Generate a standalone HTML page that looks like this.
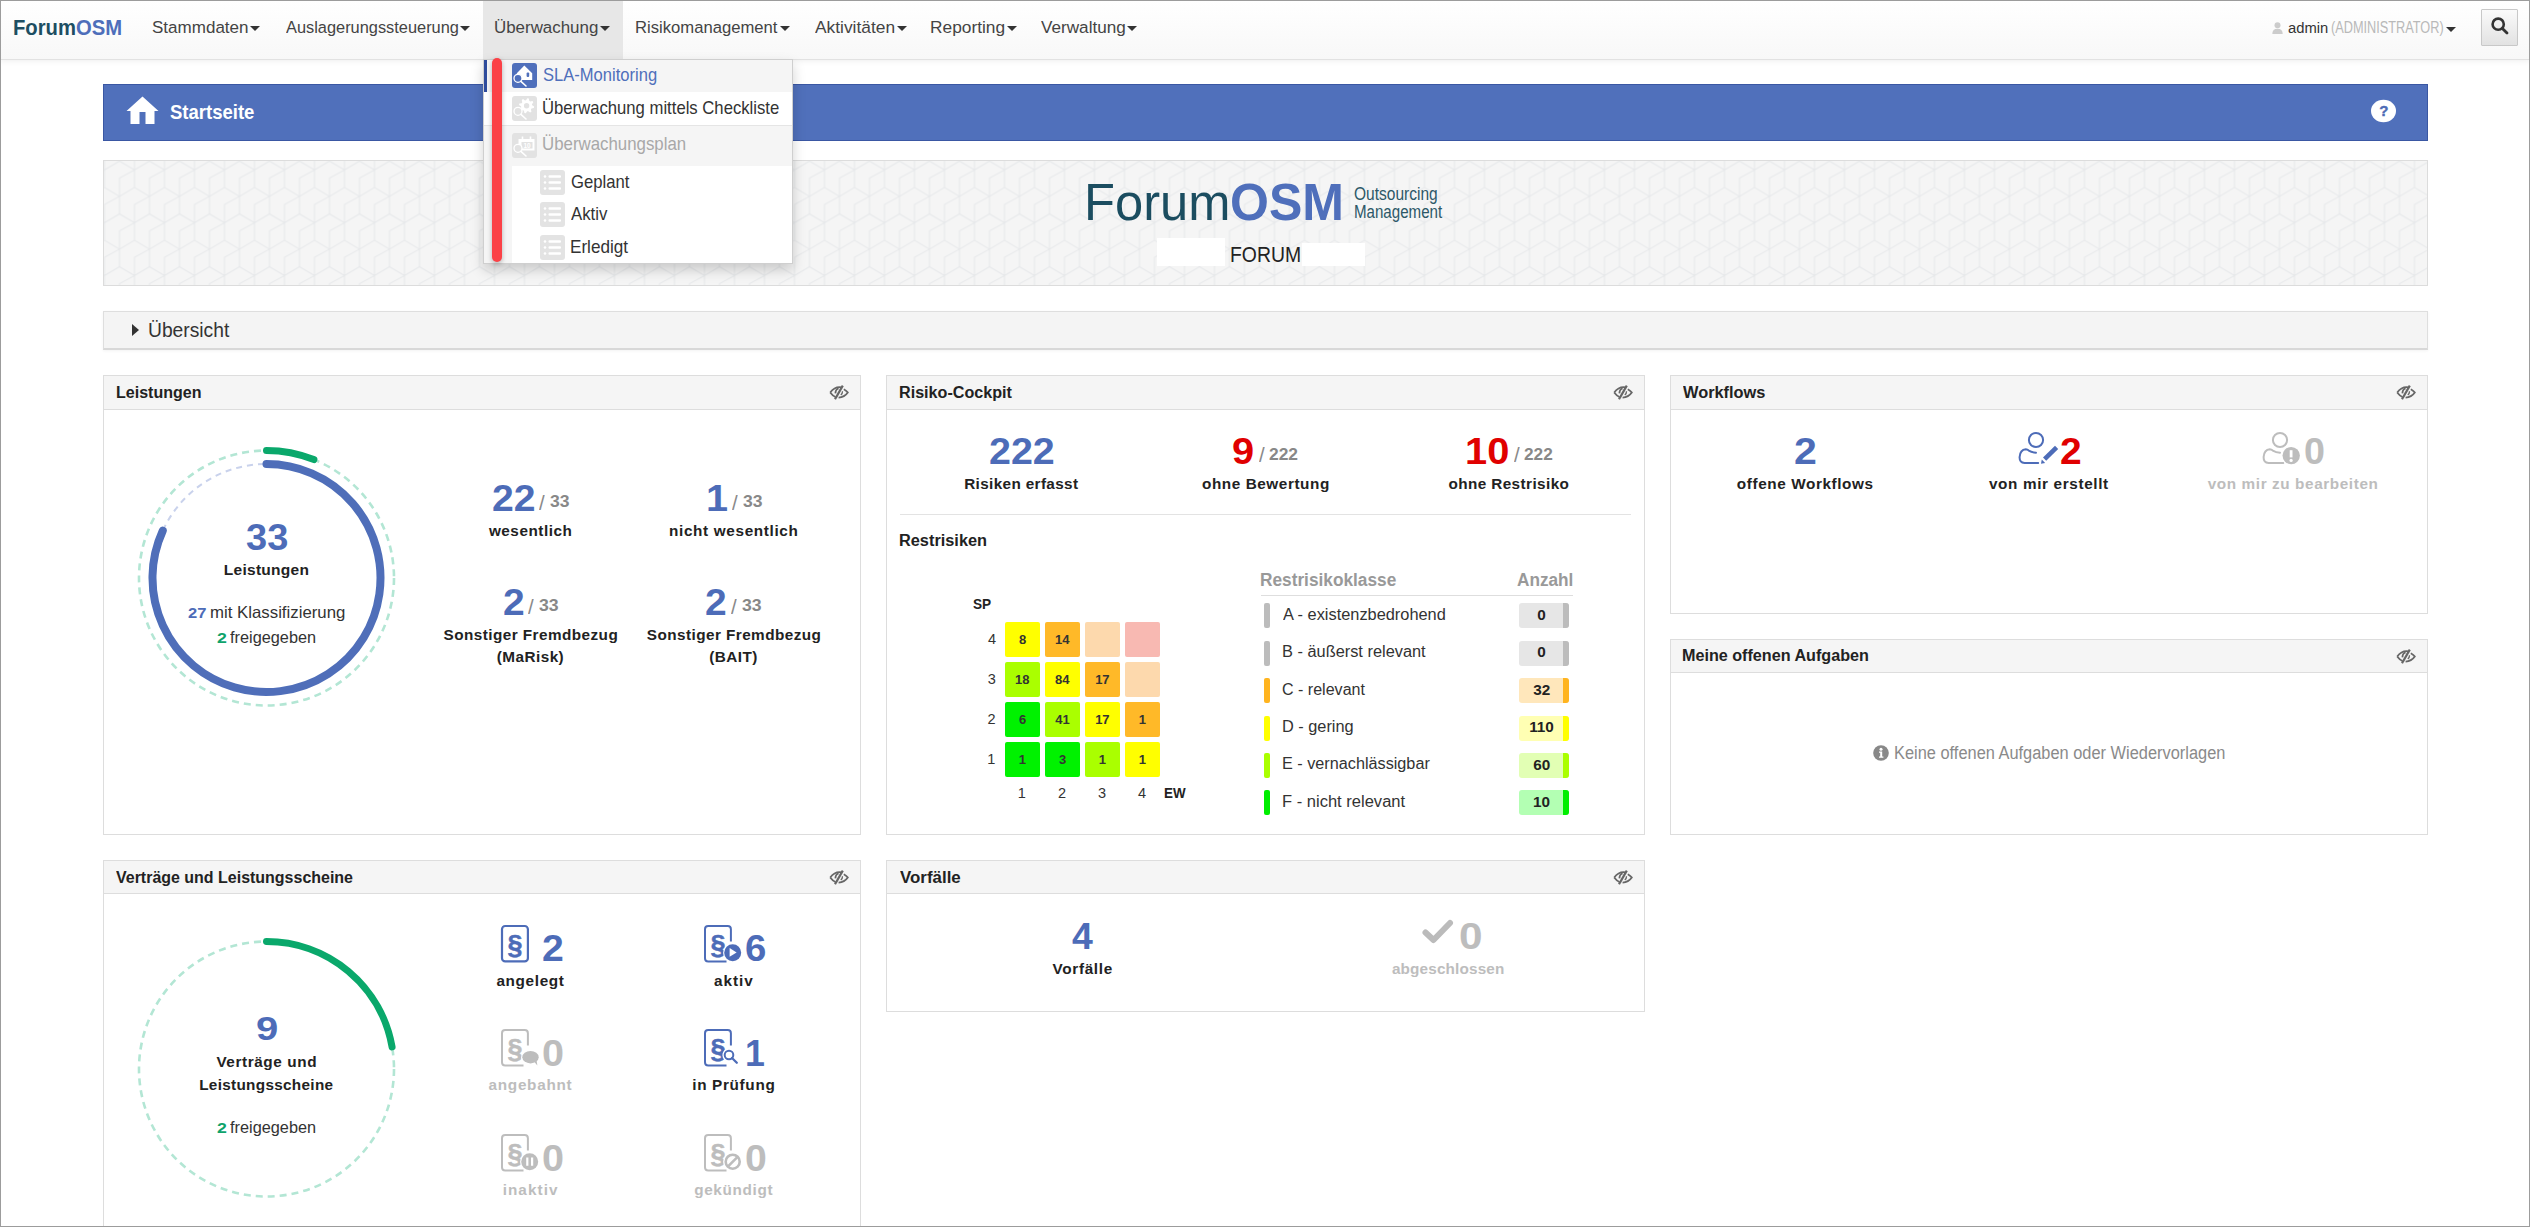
<!DOCTYPE html>
<html><head><meta charset="utf-8"><title>ForumOSM</title>
<style>
html,body{margin:0;padding:0;}
body{width:2530px;height:1227px;position:relative;overflow:hidden;background:#fff;font-family:"Liberation Sans",sans-serif;}
.t{position:absolute;white-space:pre;transform-origin:0 0;}
.r{position:absolute;box-sizing:border-box;}
svg{position:absolute;overflow:visible;}
</style></head><body>
<div class="r" style="left:0px;top:0px;width:2530px;height:60px;background:linear-gradient(#fff,#f8f8f8);border-bottom:1px solid #e2e2e2;box-shadow:0 1px 6px rgba(0,0,0,.07);"></div>
<div class="r" style="left:483px;top:0px;width:140px;height:59px;background:#e7e7e7;"></div>
<div class="t" style="left:12.68px;top:17px;font-size:21.8px;line-height:21.8px;color:#1d4e62;font-weight:bold;transform:scaleX(0.9288);">Forum<span style="color:#4e6eba">OSM</span></div>
<div class="t" style="left:152.23px;top:19px;font-size:17.4px;line-height:17.4px;color:#444;transform:scaleX(0.9790);">Stammdaten</div>
<div class="t" style="left:285.50px;top:19px;font-size:17.4px;line-height:17.4px;color:#444;transform:scaleX(0.9414);">Auslagerungssteuerung</div>
<div class="t" style="left:494.23px;top:19px;font-size:17.4px;line-height:17.4px;color:#444;transform:scaleX(0.9723);">Überwachung</div>
<div class="t" style="left:634.67px;top:19px;font-size:17.4px;line-height:17.4px;color:#444;transform:scaleX(0.9567);">Risikomanagement</div>
<div class="t" style="left:814.80px;top:19px;font-size:17.4px;line-height:17.4px;color:#444;transform:scaleX(0.9979);">Aktivitäten</div>
<div class="t" style="left:930.41px;top:19px;font-size:17.4px;line-height:17.4px;color:#444;transform:scaleX(0.9960);">Reporting</div>
<div class="t" style="left:1040.91px;top:19px;font-size:17.4px;line-height:17.4px;color:#444;transform:scaleX(0.9857);">Verwaltung</div>
<div class="r" style="left:249.5px;top:26px;width:0;height:0;border-left:5px solid transparent;border-right:5px solid transparent;border-top:5.5px solid #333;"></div>
<div class="r" style="left:460.3px;top:26px;width:0;height:0;border-left:5px solid transparent;border-right:5px solid transparent;border-top:5.5px solid #333;"></div>
<div class="r" style="left:599.8px;top:26px;width:0;height:0;border-left:5px solid transparent;border-right:5px solid transparent;border-top:5.5px solid #333;"></div>
<div class="r" style="left:779.5px;top:26px;width:0;height:0;border-left:5px solid transparent;border-right:5px solid transparent;border-top:5.5px solid #333;"></div>
<div class="r" style="left:897px;top:26px;width:0;height:0;border-left:5px solid transparent;border-right:5px solid transparent;border-top:5.5px solid #333;"></div>
<div class="r" style="left:1006.8px;top:26px;width:0;height:0;border-left:5px solid transparent;border-right:5px solid transparent;border-top:5.5px solid #333;"></div>
<div class="r" style="left:1126.9px;top:26px;width:0;height:0;border-left:5px solid transparent;border-right:5px solid transparent;border-top:5.5px solid #333;"></div>
<svg style="left:2272px;top:22px" width="11" height="12" viewBox="0 0 11 12"><circle cx="5.5" cy="3.2" r="3" fill="#ccc"/><path d="M0.3 12 Q0.3 6.8 5.5 6.8 Q10.7 6.8 10.7 12 Z" fill="#ccc"/></svg>
<div class="t" style="left:2288.01px;top:20px;font-size:15.2px;line-height:15.2px;color:#333;transform:scaleX(0.9724);">admin</div>
<div class="t" style="left:2330.74px;top:20px;font-size:15.6px;line-height:15.6px;color:#b9b9b9;transform:scaleX(0.8165);">(ADMINISTRATOR)</div>
<div class="r" style="left:2446px;top:27px;width:0;height:0;border-left:5px solid transparent;border-right:5px solid transparent;border-top:5px solid #333;"></div>
<div class="r" style="left:2481px;top:9px;width:37px;height:37px;border:1px solid #c8c8c8;background:linear-gradient(#fafafa,#e2e2e2);border-radius:1px;"></div>
<svg style="left:2491px;top:17px" width="18" height="18" viewBox="0 0 18 18"><circle cx="7.2" cy="7.2" r="5.6" fill="none" stroke="#333" stroke-width="2.6"/><line x1="11.4" y1="11.4" x2="16" y2="16" stroke="#333" stroke-width="2.8" stroke-linecap="round"/></svg>
<div class="r" style="left:103px;top:84px;width:2325px;height:57px;background:#5070bb;border:1px solid #3a57a3;"></div>
<svg style="left:126px;top:96px" width="33" height="29" viewBox="0 0 33 29"><path d="M16.5 0.5 L32.5 15 L28.5 15 L28.5 28 L19.5 28 L19.5 16 L13.5 16 L13.5 28 L4.5 28 L4.5 15 L0.5 15 Z" fill="#fff"/></svg>
<div class="t" style="left:170.14px;top:103px;font-size:19.3px;line-height:19.3px;color:#fff;font-weight:bold;transform:scaleX(0.9602);">Startseite</div>
<svg style="left:2371px;top:99px" width="25" height="25" viewBox="0 0 25 25"><ellipse cx="12.5" cy="12" rx="12.5" ry="11.2" fill="#fff"/><text x="12.8" y="16.9" text-anchor="middle" font-family="Liberation Sans" font-weight="bold" font-size="15" fill="#4e6cb6" stroke="#4e6cb6" stroke-width="0.4">?</text></svg>
<svg style="left:103px;top:160px" width="2325" height="126"><defs><pattern id="hx" patternUnits="userSpaceOnUse" x="1.5" y="27.5" width="30" height="52.8"><path d="M-30.00 -52.80 L-15.00 -44.00 L0.00 -52.80 M-15.00 -44.00 L-30.00 -35.70 L-30.00 0.00 M-15.00 -26.40 L0.00 -17.60 L15.00 -26.40 M0.00 -17.60 L-15.00 -9.30 L-15.00 26.40 M-30.00 0.00 L-15.00 8.80 L0.00 0.00 M-15.00 8.80 L-30.00 17.10 L-30.00 52.80 M-15.00 26.40 L0.00 35.20 L15.00 26.40 M0.00 35.20 L-15.00 43.50 L-15.00 79.20 M-30.00 52.80 L-15.00 61.60 L0.00 52.80 M-15.00 61.60 L-30.00 69.90 L-30.00 105.60 M-15.00 79.20 L0.00 88.00 L15.00 79.20 M0.00 88.00 L-15.00 96.30 L-15.00 132.00 M0.00 -52.80 L15.00 -44.00 L30.00 -52.80 M15.00 -44.00 L0.00 -35.70 L0.00 0.00 M15.00 -26.40 L30.00 -17.60 L45.00 -26.40 M30.00 -17.60 L15.00 -9.30 L15.00 26.40 M0.00 0.00 L15.00 8.80 L30.00 0.00 M15.00 8.80 L0.00 17.10 L0.00 52.80 M15.00 26.40 L30.00 35.20 L45.00 26.40 M30.00 35.20 L15.00 43.50 L15.00 79.20 M0.00 52.80 L15.00 61.60 L30.00 52.80 M15.00 61.60 L0.00 69.90 L0.00 105.60 M15.00 79.20 L30.00 88.00 L45.00 79.20 M30.00 88.00 L15.00 96.30 L15.00 132.00 M30.00 -52.80 L45.00 -44.00 L60.00 -52.80 M45.00 -44.00 L30.00 -35.70 L30.00 0.00 M45.00 -26.40 L60.00 -17.60 L75.00 -26.40 M60.00 -17.60 L45.00 -9.30 L45.00 26.40 M30.00 0.00 L45.00 8.80 L60.00 0.00 M45.00 8.80 L30.00 17.10 L30.00 52.80 M45.00 26.40 L60.00 35.20 L75.00 26.40 M60.00 35.20 L45.00 43.50 L45.00 79.20 M30.00 52.80 L45.00 61.60 L60.00 52.80 M45.00 61.60 L30.00 69.90 L30.00 105.60 M45.00 79.20 L60.00 88.00 L75.00 79.20 M60.00 88.00 L45.00 96.30 L45.00 132.00" fill="none" stroke="#e6e8ea" stroke-width="1"/></pattern></defs>
<rect x="0.5" y="0.5" width="2324" height="125" fill="#f5f5f5" stroke="#dcdcdc"/><rect x="1" y="1" width="2323" height="124" fill="url(#hx)"/></svg>
<div class="t" style="left:1083.65px;top:176px;font-size:52px;line-height:52px;color:#1b4d60;transform:scaleX(0.9745);">Forum</div>
<div class="t" style="left:1230.00px;top:176px;font-size:52px;line-height:52px;color:#4f6fbb;font-weight:bold;transform:scaleX(0.9624);">OSM</div>
<div class="t" style="left:1354.30px;top:186px;font-size:17.5px;line-height:17.5px;color:#2c5868;transform:scaleX(0.8866);">Outsourcing</div>
<div class="t" style="left:1353.79px;top:204px;font-size:17.5px;line-height:17.5px;color:#2c5868;transform:scaleX(0.8626);">Management</div>
<div class="r" style="left:1157px;top:238px;width:68px;height:28px;background:#fff;"></div>
<div class="r" style="left:1302px;top:243px;width:63px;height:23px;background:#fff;"></div>
<div class="t" style="left:1229.95px;top:245px;font-size:21.4px;line-height:21.4px;color:#222;transform:scaleX(0.9066);">FORUM</div>
<div class="r" style="left:103px;top:311px;width:2325px;height:39px;background:#f4f4f4;border:1px solid #dedede;border-bottom:2px solid #d8d8d8;box-shadow:0 1px 3px rgba(0,0,0,.05);"></div>
<div class="r" style="left:132px;top:324px;width:0;height:0;border-top:6px solid transparent;border-bottom:6px solid transparent;border-left:7px solid #333;"></div>
<div class="t" style="left:147.86px;top:321px;font-size:19.6px;line-height:19.6px;color:#333;transform:scaleX(0.9822);">Übersicht</div>
<div class="r" style="left:103px;top:375px;width:758px;height:460px;border:1px solid #dddddd;background:#fff;"></div>
<div class="r" style="left:103px;top:375px;width:758px;height:35px;border:1px solid #dddddd;background:#f5f5f5;"></div>
<div class="t" style="left:116.46px;top:384px;font-size:17.4px;line-height:17.4px;color:#222;font-weight:bold;transform:scaleX(0.9211);">Leistungen</div>
<svg style="left:828.8px;top:384.5px" width="20" height="15" viewBox="0 0 20 15"><path d="M1.2 7.5 Q6 1.2 12.6 2.4" fill="none" stroke="#666" stroke-width="1.8"/><path d="M1.2 7.5 Q3.5 10.6 6.5 12" fill="none" stroke="#666" stroke-width="1.8"/><path d="M14.8 4.2 Q17.5 5.6 18.8 7.5 Q15.5 12.2 9.6 12.6" fill="none" stroke="#666" stroke-width="1.8"/><path d="M13.8 0.6 L6 14.2" stroke="#666" stroke-width="2.2"/><path d="M9.6 3.4 Q6.6 4.2 6.4 8.4" fill="none" stroke="#666" stroke-width="1.8"/><path d="M13.5 6.2 Q13.6 8.6 11.8 10" fill="none" stroke="#666" stroke-width="1.3"/></svg>
<div class="r" style="left:886px;top:375px;width:759px;height:460px;border:1px solid #dddddd;background:#fff;"></div>
<div class="r" style="left:886px;top:375px;width:759px;height:35px;border:1px solid #dddddd;background:#f5f5f5;"></div>
<div class="t" style="left:898.95px;top:384px;font-size:17.4px;line-height:17.4px;color:#222;font-weight:bold;transform:scaleX(0.9278);">Risiko-Cockpit</div>
<svg style="left:1612.8px;top:384.5px" width="20" height="15" viewBox="0 0 20 15"><path d="M1.2 7.5 Q6 1.2 12.6 2.4" fill="none" stroke="#666" stroke-width="1.8"/><path d="M1.2 7.5 Q3.5 10.6 6.5 12" fill="none" stroke="#666" stroke-width="1.8"/><path d="M14.8 4.2 Q17.5 5.6 18.8 7.5 Q15.5 12.2 9.6 12.6" fill="none" stroke="#666" stroke-width="1.8"/><path d="M13.8 0.6 L6 14.2" stroke="#666" stroke-width="2.2"/><path d="M9.6 3.4 Q6.6 4.2 6.4 8.4" fill="none" stroke="#666" stroke-width="1.8"/><path d="M13.5 6.2 Q13.6 8.6 11.8 10" fill="none" stroke="#666" stroke-width="1.3"/></svg>
<div class="r" style="left:1670px;top:375px;width:758px;height:239px;border:1px solid #dddddd;background:#fff;"></div>
<div class="r" style="left:1670px;top:375px;width:758px;height:35px;border:1px solid #dddddd;background:#f5f5f5;"></div>
<div class="t" style="left:1683.40px;top:384px;font-size:17.4px;line-height:17.4px;color:#222;font-weight:bold;transform:scaleX(0.9412);">Workflows</div>
<svg style="left:2395.8px;top:384.5px" width="20" height="15" viewBox="0 0 20 15"><path d="M1.2 7.5 Q6 1.2 12.6 2.4" fill="none" stroke="#666" stroke-width="1.8"/><path d="M1.2 7.5 Q3.5 10.6 6.5 12" fill="none" stroke="#666" stroke-width="1.8"/><path d="M14.8 4.2 Q17.5 5.6 18.8 7.5 Q15.5 12.2 9.6 12.6" fill="none" stroke="#666" stroke-width="1.8"/><path d="M13.8 0.6 L6 14.2" stroke="#666" stroke-width="2.2"/><path d="M9.6 3.4 Q6.6 4.2 6.4 8.4" fill="none" stroke="#666" stroke-width="1.8"/><path d="M13.5 6.2 Q13.6 8.6 11.8 10" fill="none" stroke="#666" stroke-width="1.3"/></svg>
<div class="r" style="left:1670px;top:639px;width:758px;height:196px;border:1px solid #dddddd;background:#fff;"></div>
<div class="r" style="left:1670px;top:639px;width:758px;height:34px;border:1px solid #dddddd;background:#f5f5f5;"></div>
<div class="t" style="left:1682.35px;top:647px;font-size:17.4px;line-height:17.4px;color:#222;font-weight:bold;transform:scaleX(0.9286);">Meine offenen Aufgaben</div>
<svg style="left:2395.8px;top:648.5px" width="20" height="15" viewBox="0 0 20 15"><path d="M1.2 7.5 Q6 1.2 12.6 2.4" fill="none" stroke="#666" stroke-width="1.8"/><path d="M1.2 7.5 Q3.5 10.6 6.5 12" fill="none" stroke="#666" stroke-width="1.8"/><path d="M14.8 4.2 Q17.5 5.6 18.8 7.5 Q15.5 12.2 9.6 12.6" fill="none" stroke="#666" stroke-width="1.8"/><path d="M13.8 0.6 L6 14.2" stroke="#666" stroke-width="2.2"/><path d="M9.6 3.4 Q6.6 4.2 6.4 8.4" fill="none" stroke="#666" stroke-width="1.8"/><path d="M13.5 6.2 Q13.6 8.6 11.8 10" fill="none" stroke="#666" stroke-width="1.3"/></svg>
<div class="r" style="left:103px;top:860px;width:758px;height:400px;border:1px solid #dddddd;background:#fff;"></div>
<div class="r" style="left:103px;top:860px;width:758px;height:34px;border:1px solid #dddddd;background:#f5f5f5;"></div>
<div class="t" style="left:116.42px;top:869px;font-size:17.4px;line-height:17.4px;color:#222;font-weight:bold;transform:scaleX(0.9184);">Verträge und Leistungsscheine</div>
<svg style="left:828.8px;top:869.5px" width="20" height="15" viewBox="0 0 20 15"><path d="M1.2 7.5 Q6 1.2 12.6 2.4" fill="none" stroke="#666" stroke-width="1.8"/><path d="M1.2 7.5 Q3.5 10.6 6.5 12" fill="none" stroke="#666" stroke-width="1.8"/><path d="M14.8 4.2 Q17.5 5.6 18.8 7.5 Q15.5 12.2 9.6 12.6" fill="none" stroke="#666" stroke-width="1.8"/><path d="M13.8 0.6 L6 14.2" stroke="#666" stroke-width="2.2"/><path d="M9.6 3.4 Q6.6 4.2 6.4 8.4" fill="none" stroke="#666" stroke-width="1.8"/><path d="M13.5 6.2 Q13.6 8.6 11.8 10" fill="none" stroke="#666" stroke-width="1.3"/></svg>
<div class="r" style="left:886px;top:860px;width:759px;height:152px;border:1px solid #dddddd;background:#fff;"></div>
<div class="r" style="left:886px;top:860px;width:759px;height:34px;border:1px solid #dddddd;background:#f5f5f5;"></div>
<div class="t" style="left:899.92px;top:869px;font-size:17.4px;line-height:17.4px;color:#222;font-weight:bold;transform:scaleX(0.9718);">Vorfälle</div>
<svg style="left:1612.8px;top:869.5px" width="20" height="15" viewBox="0 0 20 15"><path d="M1.2 7.5 Q6 1.2 12.6 2.4" fill="none" stroke="#666" stroke-width="1.8"/><path d="M1.2 7.5 Q3.5 10.6 6.5 12" fill="none" stroke="#666" stroke-width="1.8"/><path d="M14.8 4.2 Q17.5 5.6 18.8 7.5 Q15.5 12.2 9.6 12.6" fill="none" stroke="#666" stroke-width="1.8"/><path d="M13.8 0.6 L6 14.2" stroke="#666" stroke-width="2.2"/><path d="M9.6 3.4 Q6.6 4.2 6.4 8.4" fill="none" stroke="#666" stroke-width="1.8"/><path d="M13.5 6.2 Q13.6 8.6 11.8 10" fill="none" stroke="#666" stroke-width="1.3"/></svg>
<svg style="left:0;top:0" width="900" height="1227">
<circle cx="266.5" cy="578" r="127.5" fill="none" stroke="#b3e6d4" stroke-width="2.6" stroke-dasharray="7 5"/>
<circle cx="266.5" cy="578" r="114" fill="none" stroke="#c9d2ec" stroke-width="2" stroke-dasharray="6 5"/>
<path d="M266.50 464.00 A114 114 0 1 1 162.76 530.72" fill="none" stroke="#4f6eb9" stroke-width="8" stroke-linecap="round"/>
<path d="M266.50 450.50 A127.5 127.5 0 0 1 313.85 459.62" fill="none" stroke="#0aa86b" stroke-width="7" stroke-linecap="round"/>
</svg>
<div class="t" style="left:245.64px;top:520px;font-size:36.4px;line-height:36.4px;color:#4d6cb8;font-weight:bold;transform:scaleX(1.0442);">33</div>
<div class="t" style="left:223.79px;top:562px;font-size:15.5px;line-height:15.5px;color:#222;font-weight:bold;letter-spacing:0.272px;">Leistungen</div>
<div class="t" style="left:188.42px;top:605px;font-size:15.2px;line-height:15.2px;color:#4d6cb8;font-weight:bold;transform:scaleX(1.0870);">27</div>
<div class="t" style="left:210.31px;top:604px;font-size:16.5px;line-height:16.5px;color:#333;transform:scaleX(1.0180);">mit Klassifizierung</div>
<div class="t" style="left:216.88px;top:630px;font-size:15.2px;line-height:15.2px;color:#0ea36b;font-weight:bold;transform:scaleX(1.1650);">2</div>
<div class="t" style="left:230.26px;top:629px;font-size:16.5px;line-height:16.5px;color:#333;transform:scaleX(0.9874);">freigegeben</div>
<div class="t" style="left:491.73px;top:480px;font-size:37px;line-height:37px;color:#4d6cb8;font-weight:bold;transform:scaleX(1.0576);">22</div>
<div class="t" style="left:539.00px;top:493px;font-size:20.5px;line-height:20.5px;color:#8a8a8a;transform:scaleX(0.9930);">/</div>
<div class="t" style="left:549.55px;top:493px;font-size:17.2px;line-height:17.2px;color:#888;font-weight:bold;transform:scaleX(1.0195);">33</div>
<div class="t" style="left:488.88px;top:523px;font-size:15.3px;line-height:15.3px;color:#222;font-weight:bold;letter-spacing:0.540px;">wesentlich</div>
<div class="t" style="left:705.63px;top:480px;font-size:37px;line-height:37px;color:#4d6cb8;font-weight:bold;transform:scaleX(1.0696);">1</div>
<div class="t" style="left:732.00px;top:493px;font-size:20.5px;line-height:20.5px;color:#8a8a8a;transform:scaleX(0.9930);">/</div>
<div class="t" style="left:742.55px;top:493px;font-size:17.2px;line-height:17.2px;color:#888;font-weight:bold;transform:scaleX(1.0195);">33</div>
<div class="t" style="left:669.01px;top:523px;font-size:15.3px;line-height:15.3px;color:#222;font-weight:bold;letter-spacing:0.659px;">nicht wesentlich</div>
<div class="t" style="left:502.64px;top:584px;font-size:37px;line-height:37px;color:#4d6cb8;font-weight:bold;transform:scaleX(1.0529);">2</div>
<div class="t" style="left:528.00px;top:597px;font-size:20.5px;line-height:20.5px;color:#8a8a8a;transform:scaleX(0.9930);">/</div>
<div class="t" style="left:538.55px;top:597px;font-size:17.2px;line-height:17.2px;color:#888;font-weight:bold;transform:scaleX(1.0250);">33</div>
<div class="t" style="left:443.54px;top:627px;font-size:15.3px;line-height:15.3px;color:#222;font-weight:bold;letter-spacing:0.446px;">Sonstiger Fremdbezug</div>
<div class="t" style="left:496.84px;top:649px;font-size:15.3px;line-height:15.3px;color:#222;font-weight:bold;letter-spacing:0.447px;">(MaRisk)</div>
<div class="t" style="left:705.24px;top:584px;font-size:37px;line-height:37px;color:#4d6cb8;font-weight:bold;transform:scaleX(1.0529);">2</div>
<div class="t" style="left:731.00px;top:597px;font-size:20.5px;line-height:20.5px;color:#8a8a8a;transform:scaleX(0.9930);">/</div>
<div class="t" style="left:741.55px;top:597px;font-size:17.2px;line-height:17.2px;color:#888;font-weight:bold;transform:scaleX(1.0250);">33</div>
<div class="t" style="left:646.84px;top:627px;font-size:15.3px;line-height:15.3px;color:#222;font-weight:bold;letter-spacing:0.436px;">Sonstiger Fremdbezug</div>
<div class="t" style="left:709.24px;top:649px;font-size:15.3px;line-height:15.3px;color:#222;font-weight:bold;letter-spacing:0.446px;">(BAIT)</div>
<div class="t" style="left:988.82px;top:433px;font-size:37px;line-height:37px;color:#4d6cb8;font-weight:bold;transform:scaleX(1.0658);">222</div>
<div class="t" style="left:964.21px;top:476px;font-size:15.3px;line-height:15.3px;color:#222;font-weight:bold;letter-spacing:0.355px;">Risiken erfasst</div>
<div class="t" style="left:1232.31px;top:433px;font-size:37px;line-height:37px;color:#e00000;font-weight:bold;transform:scaleX(1.0755);">9</div>
<div class="t" style="left:1259.00px;top:445px;font-size:20.5px;line-height:20.5px;color:#8a8a8a;transform:scaleX(0.9930);">/</div>
<div class="t" style="left:1269.29px;top:446px;font-size:17.2px;line-height:17.2px;color:#888;font-weight:bold;transform:scaleX(1.0129);">222</div>
<div class="t" style="left:1201.99px;top:476px;font-size:15.3px;line-height:15.3px;color:#222;font-weight:bold;letter-spacing:0.572px;">ohne Bewertung</div>
<div class="t" style="left:1465.01px;top:433px;font-size:37px;line-height:37px;color:#e00000;font-weight:bold;transform:scaleX(1.0757);">10</div>
<div class="t" style="left:1513.70px;top:445px;font-size:20.5px;line-height:20.5px;color:#8a8a8a;transform:scaleX(0.9930);">/</div>
<div class="t" style="left:1524.00px;top:446px;font-size:17.2px;line-height:17.2px;color:#888;font-weight:bold;transform:scaleX(1.0019);">222</div>
<div class="t" style="left:1448.39px;top:476px;font-size:15.3px;line-height:15.3px;color:#222;font-weight:bold;letter-spacing:0.414px;">ohne Restrisiko</div>
<div class="r" style="left:900px;top:514px;width:731px;height:1px;background:#e3e3e3;"></div>
<div class="t" style="left:898.94px;top:532px;font-size:17.4px;line-height:17.4px;color:#222;font-weight:bold;transform:scaleX(0.9388);">Restrisiken</div>
<div class="t" style="left:973.09px;top:597px;font-size:14.5px;line-height:14.5px;color:#222;font-weight:bold;transform:scaleX(0.9395);">SP</div>
<div class="t" style="left:988.01px;top:632px;font-size:14.5px;line-height:14.5px;color:#333;">4</div>
<div class="r" style="left:1005px;top:622px;width:35px;height:35px;background:#ffff00;border-radius:2px;"></div>
<div class="t" style="left:1018.89px;top:633px;font-size:13px;line-height:13px;color:#333;font-weight:bold;">8</div>
<div class="r" style="left:1045px;top:622px;width:35px;height:35px;background:#ffb928;border-radius:2px;"></div>
<div class="t" style="left:1054.93px;top:633px;font-size:13px;line-height:13px;color:#333;font-weight:bold;">14</div>
<div class="r" style="left:1085px;top:622px;width:35px;height:35px;background:#fdd9ad;border-radius:2px;"></div>
<div class="r" style="left:1125px;top:622px;width:35px;height:35px;background:#f8b9b2;border-radius:2px;"></div>
<div class="t" style="left:987.79px;top:672px;font-size:14.5px;line-height:14.5px;color:#333;">3</div>
<div class="r" style="left:1005px;top:662px;width:35px;height:35px;background:#aaff00;border-radius:2px;"></div>
<div class="t" style="left:1015.09px;top:673px;font-size:13px;line-height:13px;color:#333;font-weight:bold;">18</div>
<div class="r" style="left:1045px;top:662px;width:35px;height:35px;background:#ffff00;border-radius:2px;"></div>
<div class="t" style="left:1055.12px;top:673px;font-size:13px;line-height:13px;color:#333;font-weight:bold;">84</div>
<div class="r" style="left:1085px;top:662px;width:35px;height:35px;background:#ffb928;border-radius:2px;"></div>
<div class="t" style="left:1095.15px;top:673px;font-size:13px;line-height:13px;color:#333;font-weight:bold;">17</div>
<div class="r" style="left:1125px;top:662px;width:35px;height:35px;background:#fdd9ad;border-radius:2px;"></div>
<div class="t" style="left:987.57px;top:712px;font-size:14.5px;line-height:14.5px;color:#333;">2</div>
<div class="r" style="left:1005px;top:702px;width:35px;height:35px;background:#00f200;border-radius:2px;"></div>
<div class="t" style="left:1018.89px;top:713px;font-size:13px;line-height:13px;color:#333;font-weight:bold;">6</div>
<div class="r" style="left:1045px;top:702px;width:35px;height:35px;background:#aaff00;border-radius:2px;"></div>
<div class="t" style="left:1055.35px;top:713px;font-size:13px;line-height:13px;color:#333;font-weight:bold;">41</div>
<div class="r" style="left:1085px;top:702px;width:35px;height:35px;background:#ffff00;border-radius:2px;"></div>
<div class="t" style="left:1095.15px;top:713px;font-size:13px;line-height:13px;color:#333;font-weight:bold;">17</div>
<div class="r" style="left:1125px;top:702px;width:35px;height:35px;background:#ffb928;border-radius:2px;"></div>
<div class="t" style="left:1138.66px;top:713px;font-size:13px;line-height:13px;color:#333;font-weight:bold;">1</div>
<div class="t" style="left:987.21px;top:752px;font-size:14.5px;line-height:14.5px;color:#333;">1</div>
<div class="r" style="left:1005px;top:742px;width:35px;height:35px;background:#00f200;border-radius:2px;"></div>
<div class="t" style="left:1018.67px;top:753px;font-size:13px;line-height:13px;color:#333;font-weight:bold;">1</div>
<div class="r" style="left:1045px;top:742px;width:35px;height:35px;background:#00f200;border-radius:2px;"></div>
<div class="t" style="left:1058.99px;top:753px;font-size:13px;line-height:13px;color:#333;font-weight:bold;">3</div>
<div class="r" style="left:1085px;top:742px;width:35px;height:35px;background:#aaff00;border-radius:2px;"></div>
<div class="t" style="left:1098.66px;top:753px;font-size:13px;line-height:13px;color:#333;font-weight:bold;">1</div>
<div class="r" style="left:1125px;top:742px;width:35px;height:35px;background:#ffff00;border-radius:2px;"></div>
<div class="t" style="left:1138.66px;top:753px;font-size:13px;line-height:13px;color:#333;font-weight:bold;">1</div>
<div class="t" style="left:1017.76px;top:786px;font-size:14.5px;line-height:14.5px;color:#333;">1</div>
<div class="t" style="left:1057.98px;top:786px;font-size:14.5px;line-height:14.5px;color:#333;">2</div>
<div class="t" style="left:1098.01px;top:786px;font-size:14.5px;line-height:14.5px;color:#333;">3</div>
<div class="t" style="left:1138.01px;top:786px;font-size:14.5px;line-height:14.5px;color:#333;">4</div>
<div class="t" style="left:1164.13px;top:786px;font-size:14.5px;line-height:14.5px;color:#222;font-weight:bold;transform:scaleX(0.9240);">EW</div>
<div class="t" style="left:1260.18px;top:572px;font-size:17.5px;line-height:17.5px;color:#999;font-weight:bold;transform:scaleX(0.9861);">Restrisikoklasse</div>
<div class="t" style="left:1517.17px;top:572px;font-size:17.5px;line-height:17.5px;color:#999;font-weight:bold;transform:scaleX(0.9832);">Anzahl</div>
<div class="r" style="left:1261px;top:595px;width:312px;height:1px;background:#dedede;"></div>
<div class="r" style="left:1264px;top:603.3px;width:6px;height:25px;background:#bcbcbc;border-radius:2px;"></div>
<div class="t" style="left:1282.90px;top:606px;font-size:17.3px;line-height:17.3px;color:#333;transform:scaleX(0.9468);">A - existenzbedrohend</div>
<div class="r" style="left:1519px;top:603.3px;width:50px;height:25px;background:#e6e6e6;border-radius:3px;overflow:hidden;"></div>
<div class="r" style="left:1563px;top:603.3px;width:6px;height:25px;background:#bcbcbc;border-radius:0 3px 3px 0;"></div>
<div class="t" style="left:1537.35px;top:607px;font-size:15.3px;line-height:15.3px;color:#222;font-weight:bold;">0</div>
<div class="r" style="left:1264px;top:640.7px;width:6px;height:25px;background:#bcbcbc;border-radius:2px;"></div>
<div class="t" style="left:1281.59px;top:643px;font-size:17.3px;line-height:17.3px;color:#333;transform:scaleX(0.9467);">B - äußerst relevant</div>
<div class="r" style="left:1519px;top:640.7px;width:50px;height:25px;background:#e6e6e6;border-radius:3px;overflow:hidden;"></div>
<div class="r" style="left:1563px;top:640.7px;width:6px;height:25px;background:#bcbcbc;border-radius:0 3px 3px 0;"></div>
<div class="t" style="left:1537.35px;top:644px;font-size:15.3px;line-height:15.3px;color:#222;font-weight:bold;">0</div>
<div class="r" style="left:1264px;top:678.1px;width:6px;height:25px;background:#ffb41f;border-radius:2px;"></div>
<div class="t" style="left:1282.10px;top:681px;font-size:17.3px;line-height:17.3px;color:#333;transform:scaleX(0.9287);">C - relevant</div>
<div class="r" style="left:1519px;top:678.1px;width:50px;height:25px;background:#ffe7bb;border-radius:3px;overflow:hidden;"></div>
<div class="r" style="left:1563px;top:678.1px;width:6px;height:25px;background:#ffb41f;border-radius:0 3px 3px 0;"></div>
<div class="t" style="left:1533.26px;top:682px;font-size:15.3px;line-height:15.3px;color:#222;font-weight:bold;">32</div>
<div class="r" style="left:1264px;top:715.5px;width:6px;height:25px;background:#ffff00;border-radius:2px;"></div>
<div class="t" style="left:1281.59px;top:718px;font-size:17.3px;line-height:17.3px;color:#333;transform:scaleX(0.9439);">D - gering</div>
<div class="r" style="left:1519px;top:715.5px;width:50px;height:25px;background:#ffffb3;border-radius:3px;overflow:hidden;"></div>
<div class="r" style="left:1563px;top:715.5px;width:6px;height:25px;background:#ffff00;border-radius:0 3px 3px 0;"></div>
<div class="t" style="left:1529.13px;top:719px;font-size:15.3px;line-height:15.3px;color:#222;font-weight:bold;">110</div>
<div class="r" style="left:1264px;top:752.9px;width:6px;height:25px;background:#aaff00;border-radius:2px;"></div>
<div class="t" style="left:1281.60px;top:755px;font-size:17.3px;line-height:17.3px;color:#333;transform:scaleX(0.9383);">E - vernachlässigbar</div>
<div class="r" style="left:1519px;top:752.9px;width:50px;height:25px;background:#e2ffb4;border-radius:3px;overflow:hidden;"></div>
<div class="r" style="left:1563px;top:752.9px;width:6px;height:25px;background:#aaff00;border-radius:0 3px 3px 0;"></div>
<div class="t" style="left:1533.15px;top:757px;font-size:15.3px;line-height:15.3px;color:#222;font-weight:bold;">60</div>
<div class="r" style="left:1264px;top:790.3px;width:6px;height:25px;background:#00ee00;border-radius:2px;"></div>
<div class="t" style="left:1281.58px;top:793px;font-size:17.3px;line-height:17.3px;color:#333;transform:scaleX(0.9566);">F - nicht relevant</div>
<div class="r" style="left:1519px;top:790.3px;width:50px;height:25px;background:#b3ffb3;border-radius:3px;overflow:hidden;"></div>
<div class="r" style="left:1563px;top:790.3px;width:6px;height:25px;background:#00ee00;border-radius:0 3px 3px 0;"></div>
<div class="t" style="left:1532.96px;top:794px;font-size:15.3px;line-height:15.3px;color:#222;font-weight:bold;">10</div>
<div class="t" style="left:1793.56px;top:433px;font-size:37px;line-height:37px;color:#4d6cb8;font-weight:bold;transform:scaleX(1.1092);">2</div>
<div class="t" style="left:1736.79px;top:476px;font-size:15.3px;line-height:15.3px;color:#222;font-weight:bold;letter-spacing:0.607px;">offene Workflows</div>
<svg style="left:2016.4px;top:428.4px" width="46" height="40" viewBox="-20 -12 46 40"><circle cx="0" cy="0" r="7.1" fill="none" stroke="#4d6cb8" stroke-width="2"/><path d="M0 12.8 Q-4 12.5 -7.2 10.6 Q-8.6 9.4 -10.2 9.3 Q-15.9 9.8 -16.4 17 Q-16.6 22.8 -11.4 22.9 L2.2 22.9" fill="none" stroke="#4d6cb8" stroke-width="2" stroke-linecap="round"/><path d="M5.0 23.7 L5.8 19.6 L9.2 22.9 Z" fill="#4d6cb8"/><path d="M8.6 19.2 L20.6 7.4" stroke="#4d6cb8" stroke-width="4.6"/></svg>
<div class="t" style="left:2059.84px;top:433px;font-size:37px;line-height:37px;color:#e00000;font-weight:bold;transform:scaleX(1.0529);">2</div>
<div class="t" style="left:1988.92px;top:476px;font-size:15.3px;line-height:15.3px;color:#222;font-weight:bold;letter-spacing:0.640px;">von mir erstellt</div>
<svg style="left:2260.3px;top:428.4px" width="46" height="40" viewBox="-20 -12 46 40"><circle cx="0" cy="0" r="7.1" fill="none" stroke="#bdbdbd" stroke-width="2"/><path d="M0 12.8 Q-4 12.5 -7.2 10.6 Q-8.6 9.4 -10.2 9.3 Q-15.9 9.8 -16.4 17 Q-16.6 22.8 -11.4 22.9 L3.3 22.9" fill="none" stroke="#bdbdbd" stroke-width="2" stroke-linecap="round"/><circle cx="11.2" cy="15.6" r="9.6" fill="#fff"/><circle cx="11.2" cy="15.6" r="8.7" fill="#bdbdbd"/><path d="M11.1 10.2 L11.1 17.4" stroke="#fff" stroke-width="2.8"/><circle cx="11.1" cy="20.4" r="1.6" fill="#fff"/></svg>
<div class="t" style="left:2303.79px;top:433px;font-size:37px;line-height:37px;color:#bdbdbd;font-weight:bold;transform:scaleX(1.0185);">0</div>
<div class="t" style="left:2207.72px;top:476px;font-size:15.3px;line-height:15.3px;color:#bdbdbd;font-weight:bold;letter-spacing:0.603px;">von mir zu bearbeiten</div>
<svg style="left:1873px;top:745px" width="16" height="16" viewBox="0 0 16 16"><circle cx="8" cy="8" r="7.8" fill="#888"/><circle cx="8" cy="4.2" r="1.5" fill="#fff"/><path d="M6 6.6 L9.2 6.6 L9.2 11.6 L10.4 11.6 L10.4 12.8 L6 12.8 L6 11.6 L7.2 11.6 L7.2 7.8 L6 7.8 Z" fill="#fff"/></svg>
<div class="t" style="left:1893.59px;top:744px;font-size:18px;line-height:18px;color:#8a8a8a;transform:scaleX(0.9105);">Keine offenen Aufgaben oder Wiedervorlagen</div>
<svg style="left:0;top:0" width="900" height="1227">
<circle cx="266.5" cy="1069" r="127.5" fill="none" stroke="#b3e6d4" stroke-width="2.6" stroke-dasharray="7 5"/>
<path d="M266.50 941.50 A127.5 127.5 0 0 1 392.06 1046.86" fill="none" stroke="#0aa86b" stroke-width="7" stroke-linecap="round"/>
</svg>
<div class="t" style="left:255.60px;top:1011px;font-size:34px;line-height:34px;color:#4d6cb8;font-weight:bold;transform:scaleX(1.1765);">9</div>
<div class="t" style="left:216.42px;top:1054px;font-size:15.3px;line-height:15.3px;color:#222;font-weight:bold;letter-spacing:0.599px;">Verträge und</div>
<div class="t" style="left:199.21px;top:1077px;font-size:15.3px;line-height:15.3px;color:#222;font-weight:bold;letter-spacing:0.310px;">Leistungsscheine</div>
<div class="t" style="left:216.88px;top:1120px;font-size:15.2px;line-height:15.2px;color:#0ea36b;font-weight:bold;transform:scaleX(1.1650);">2</div>
<div class="t" style="left:230.26px;top:1119px;font-size:16.5px;line-height:16.5px;color:#333;transform:scaleX(0.9874);">freigegeben</div>
<svg style="left:500.5px;top:924.8px" width="44" height="40" viewBox="0 0 44 40"><rect x="1" y="1" width="25.9" height="35.4" rx="3.2" fill="none" stroke="#4d6cb8" stroke-width="2.2"/><text x="13.9" y="29.4" text-anchor="middle" font-family="Liberation Sans" font-weight="bold" font-size="27" fill="#4d6cb8" stroke="#4d6cb8" stroke-width="0.5">§</text></svg>
<div class="t" style="left:541.73px;top:930px;font-size:37px;line-height:37px;color:#4d6cb8;font-weight:bold;transform:scaleX(1.0586);">2</div>
<div class="t" style="left:496.44px;top:973px;font-size:15.3px;line-height:15.3px;color:#222;font-weight:bold;letter-spacing:0.647px;">angelegt</div>
<svg style="left:703.8px;top:924.8px" width="44" height="40" viewBox="0 0 44 40"><path d="M26.9 16.5 L26.9 4.2 Q26.9 1 23.7 1 L4.2 1 Q1 1 1 4.2 L1 33.2 Q1 36.4 4.2 36.4 L22.5 36.4" fill="none" stroke="#4d6cb8" stroke-width="2"/><text x="13.9" y="29.4" text-anchor="middle" font-family="Liberation Sans" font-weight="bold" font-size="27" fill="#4d6cb8" stroke="#4d6cb8" stroke-width="0.5">§</text><circle cx="28.7" cy="27.7" r="9.6" fill="#fff"/><circle cx="28.7" cy="27.7" r="8.5" fill="#4d6cb8"/><path d="M25.6 23 L32.6 27.5 L25.6 31.8 Z" fill="#fff"/></svg>
<div class="t" style="left:744.96px;top:930px;font-size:37px;line-height:37px;color:#4d6cb8;font-weight:bold;transform:scaleX(1.0365);">6</div>
<div class="t" style="left:714.04px;top:973px;font-size:15.3px;line-height:15.3px;color:#222;font-weight:bold;letter-spacing:0.938px;">aktiv</div>
<svg style="left:500.8px;top:1028.8px" width="44" height="40" viewBox="0 0 44 40"><path d="M26.9 16.5 L26.9 4.2 Q26.9 1 23.7 1 L4.2 1 Q1 1 1 4.2 L1 33.2 Q1 36.4 4.2 36.4 L22.5 36.4" fill="none" stroke="#bdbdbd" stroke-width="2"/><text x="13.9" y="29.4" text-anchor="middle" font-family="Liberation Sans" font-weight="bold" font-size="27" fill="#bdbdbd" stroke="#bdbdbd" stroke-width="0.5">§</text><ellipse cx="29.5" cy="28.4" rx="9.4" ry="7.6" fill="#fff"/><ellipse cx="29.5" cy="28.2" rx="8.2" ry="6.2" fill="#bdbdbd"/><path d="M32.5 32 L36.4 36.4 L35.4 30.5 Z" fill="#bdbdbd"/></svg>
<div class="t" style="left:541.52px;top:1035px;font-size:37px;line-height:37px;color:#bdbdbd;font-weight:bold;transform:scaleX(1.0697);">0</div>
<div class="t" style="left:488.54px;top:1077px;font-size:15.3px;line-height:15.3px;color:#bdbdbd;font-weight:bold;letter-spacing:0.721px;">angebahnt</div>
<svg style="left:703.8px;top:1028.8px" width="44" height="40" viewBox="0 0 44 40"><path d="M26.9 16.5 L26.9 4.2 Q26.9 1 23.7 1 L4.2 1 Q1 1 1 4.2 L1 33.2 Q1 36.4 4.2 36.4 L22.5 36.4" fill="none" stroke="#4d6cb8" stroke-width="2"/><text x="13.9" y="29.4" text-anchor="middle" font-family="Liberation Sans" font-weight="bold" font-size="27" fill="#4d6cb8" stroke="#4d6cb8" stroke-width="0.5">§</text><circle cx="25" cy="26" r="6.6" fill="#fff"/><circle cx="25" cy="26" r="4.3" fill="none" stroke="#4d6cb8" stroke-width="2"/><path d="M28 29 L32.8 33.8" stroke="#4d6cb8" stroke-width="2.3" stroke-linecap="round"/></svg>
<div class="t" style="left:745.46px;top:1035px;font-size:37px;line-height:37px;color:#4d6cb8;font-weight:bold;transform:scaleX(0.9661);">1</div>
<div class="t" style="left:692.23px;top:1077px;font-size:15.3px;line-height:15.3px;color:#222;font-weight:bold;letter-spacing:0.674px;">in Prüfung</div>
<svg style="left:500.8px;top:1133.8px" width="44" height="40" viewBox="0 0 44 40"><path d="M26.9 16.5 L26.9 4.2 Q26.9 1 23.7 1 L4.2 1 Q1 1 1 4.2 L1 33.2 Q1 36.4 4.2 36.4 L22.5 36.4" fill="none" stroke="#bdbdbd" stroke-width="2"/><text x="13.9" y="29.4" text-anchor="middle" font-family="Liberation Sans" font-weight="bold" font-size="27" fill="#bdbdbd" stroke="#bdbdbd" stroke-width="0.5">§</text><circle cx="28.7" cy="27.7" r="9.6" fill="#fff"/><circle cx="28.7" cy="27.7" r="8.5" fill="#bdbdbd"/><path d="M26.3 23.6 L26.3 31.8 M31.1 23.6 L31.1 31.8" stroke="#fff" stroke-width="2.2"/></svg>
<div class="t" style="left:541.52px;top:1140px;font-size:37px;line-height:37px;color:#bdbdbd;font-weight:bold;transform:scaleX(1.0697);">0</div>
<div class="t" style="left:502.63px;top:1182px;font-size:15.3px;line-height:15.3px;color:#bdbdbd;font-weight:bold;letter-spacing:1.070px;">inaktiv</div>
<svg style="left:703.8px;top:1133.8px" width="44" height="40" viewBox="0 0 44 40"><path d="M26.9 16.5 L26.9 4.2 Q26.9 1 23.7 1 L4.2 1 Q1 1 1 4.2 L1 33.2 Q1 36.4 4.2 36.4 L22.5 36.4" fill="none" stroke="#bdbdbd" stroke-width="2"/><text x="13.9" y="29.4" text-anchor="middle" font-family="Liberation Sans" font-weight="bold" font-size="27" fill="#bdbdbd" stroke="#bdbdbd" stroke-width="0.5">§</text><circle cx="28.7" cy="27.7" r="9.6" fill="#fff"/><circle cx="28.7" cy="27.7" r="7" fill="none" stroke="#bdbdbd" stroke-width="2.6"/><path d="M23.8 32.6 L33.6 22.8" stroke="#bdbdbd" stroke-width="2.6"/></svg>
<div class="t" style="left:744.73px;top:1140px;font-size:37px;line-height:37px;color:#bdbdbd;font-weight:bold;transform:scaleX(1.0583);">0</div>
<div class="t" style="left:694.19px;top:1182px;font-size:15.3px;line-height:15.3px;color:#bdbdbd;font-weight:bold;letter-spacing:0.651px;">gekündigt</div>
<div class="t" style="left:1072.14px;top:918px;font-size:37px;line-height:37px;color:#4d6cb8;font-weight:bold;transform:scaleX(1.0104);">4</div>
<div class="t" style="left:1052.52px;top:961px;font-size:15.3px;line-height:15.3px;color:#222;font-weight:bold;letter-spacing:0.676px;">Vorfälle</div>
<svg style="left:1422px;top:919px" width="32" height="26" viewBox="0 0 32 26"><path d="M3.5 13.5 L11.5 21 L28 4" fill="none" stroke="#bbb" stroke-width="6" stroke-linecap="round" stroke-linejoin="round"/></svg>
<div class="t" style="left:1458.81px;top:918px;font-size:37px;line-height:37px;color:#bdbdbd;font-weight:bold;transform:scaleX(1.1437);">0</div>
<div class="t" style="left:1391.94px;top:961px;font-size:15.3px;line-height:15.3px;color:#bdbdbd;font-weight:bold;letter-spacing:0.153px;">abgeschlossen</div>
<div class="r" style="left:483px;top:59px;width:310px;height:205px;background:#fff;border:1px solid #cfcfcf;box-shadow:0 6px 12px rgba(0,0,0,.175);"></div>
<div class="r" style="left:484px;top:60px;width:308px;height:32px;background:#f5f5f5;"></div>
<div class="r" style="left:484px;top:60px;width:3px;height:32px;background:#2f4c9c;"></div>
<div class="r" style="left:484px;top:125px;width:308px;height:1px;background:#e5e5e5;"></div>
<div class="r" style="left:484px;top:126px;width:308px;height:40px;background:#f5f5f5;"></div>
<div class="r" style="left:484px;top:166px;width:28px;height:97px;background:#f5f5f5;"></div>
<svg style="left:512px;top:63px" width="25" height="25" viewBox="0 0 25 25"><rect x="0" y="0" width="25" height="25" rx="3" fill="#4f6fbb"/><path d="M12.3 2.6 L20.2 10.2 L20.2 17 L4.8 17 L4.8 10.2 Z" fill="#fff"/><rect x="14.6" y="9.6" width="2.6" height="4.4" rx="1" fill="#4f6fbb"/><circle cx="6" cy="15.3" r="4" fill="#4f6fbb" stroke="#fff" stroke-width="1.3"/><path d="M8.9 18.3 L14 23" stroke="#fff" stroke-width="1.6" stroke-linecap="round"/></svg>
<div class="t" style="left:542.65px;top:67px;font-size:17.9px;line-height:17.9px;color:#4f6fbb;transform:scaleX(0.9255);">SLA-Monitoring</div>
<svg style="left:512px;top:96px" width="25" height="25" viewBox="0 0 25 25"><rect x="0" y="0" width="25" height="25" rx="3" fill="#e2e2e2"/><path d="M22.16 10.54 L21.87 12.01 L19.54 12.44 L18.93 13.35 L19.42 15.67 L18.18 16.50 L16.23 15.16 L15.15 15.37 L13.86 17.36 L12.39 17.07 L11.96 14.74 L11.05 14.13 L8.73 14.62 L7.90 13.38 L9.24 11.43 L9.03 10.35 L7.04 9.06 L7.33 7.59 L9.66 7.16 L10.27 6.25 L9.78 3.93 L11.02 3.10 L12.97 4.44 L14.05 4.23 L15.34 2.24 L16.81 2.53 L17.24 4.86 L18.15 5.47 L20.47 4.98 L21.30 6.22 L19.96 8.17 L20.17 9.25 Z" fill="#fff"/><circle cx="14.6" cy="9.8" r="2.7" fill="#e2e2e2"/><circle cx="6" cy="15.3" r="4" fill="#e2e2e2" stroke="#fff" stroke-width="1.3"/><path d="M8.9 18.3 L14 23" stroke="#fff" stroke-width="1.6" stroke-linecap="round"/></svg>
<div class="t" style="left:542.15px;top:100px;font-size:17.9px;line-height:17.9px;color:#333;transform:scaleX(0.9320);">Überwachung mittels Checkliste</div>
<svg style="left:512px;top:133px" width="25" height="25" viewBox="0 0 25 25"><rect x="0" y="0" width="25" height="25" rx="3" fill="#e2e2e2"/><path d="M6.5 6 L22.5 6 L22.5 17.5 L6.5 17.5 Z" fill="#fff"/><path d="M10.5 3.5 L10.5 6.5 M18.5 3.5 L18.5 6.5" stroke="#fff" stroke-width="1.6"/><rect x="9.5" y="9" width="11" height="6.5" fill="#e2e2e2"/><text x="15" y="14.6" text-anchor="middle" font-family="Liberation Sans" font-weight="bold" font-size="6.5" fill="#fff">10</text><circle cx="6" cy="15.3" r="4" fill="#e2e2e2" stroke="#fff" stroke-width="1.3"/><path d="M8.9 18.3 L14 23" stroke="#fff" stroke-width="1.6" stroke-linecap="round"/></svg>
<div class="t" style="left:542.14px;top:136px;font-size:17.9px;line-height:17.9px;color:#a8a8a8;transform:scaleX(0.9416);">Überwachungsplan</div>
<svg style="left:540px;top:170px" width="25" height="25" viewBox="0 0 25 25"><rect x="0" y="0" width="25" height="25" rx="3" fill="#e3e3e3"/><circle cx="5" cy="6.5" r="1.3" fill="#fff"/><rect x="8.5" y="5.2" width="12.5" height="2.6" rx="1" fill="#fff"/><circle cx="5" cy="12.5" r="1.3" fill="#fff"/><rect x="8.5" y="11.2" width="12.5" height="2.6" rx="1" fill="#fff"/><circle cx="5" cy="18.5" r="1.3" fill="#fff"/><rect x="8.5" y="17.2" width="12.5" height="2.6" rx="1" fill="#fff"/></svg>
<div class="t" style="left:570.67px;top:174px;font-size:17.9px;line-height:17.9px;color:#333;transform:scaleX(0.9325);">Geplant</div>
<svg style="left:540px;top:202px" width="25" height="25" viewBox="0 0 25 25"><rect x="0" y="0" width="25" height="25" rx="3" fill="#e3e3e3"/><circle cx="5" cy="6.5" r="1.3" fill="#fff"/><rect x="8.5" y="5.2" width="12.5" height="2.6" rx="1" fill="#fff"/><circle cx="5" cy="12.5" r="1.3" fill="#fff"/><rect x="8.5" y="11.2" width="12.5" height="2.6" rx="1" fill="#fff"/><circle cx="5" cy="18.5" r="1.3" fill="#fff"/><rect x="8.5" y="17.2" width="12.5" height="2.6" rx="1" fill="#fff"/></svg>
<div class="t" style="left:571.10px;top:206px;font-size:17.9px;line-height:17.9px;color:#333;transform:scaleX(0.9389);">Aktiv</div>
<svg style="left:540px;top:235px" width="25" height="25" viewBox="0 0 25 25"><rect x="0" y="0" width="25" height="25" rx="3" fill="#e3e3e3"/><circle cx="5" cy="6.5" r="1.3" fill="#fff"/><rect x="8.5" y="5.2" width="12.5" height="2.6" rx="1" fill="#fff"/><circle cx="5" cy="12.5" r="1.3" fill="#fff"/><rect x="8.5" y="11.2" width="12.5" height="2.6" rx="1" fill="#fff"/><circle cx="5" cy="18.5" r="1.3" fill="#fff"/><rect x="8.5" y="17.2" width="12.5" height="2.6" rx="1" fill="#fff"/></svg>
<div class="t" style="left:570.13px;top:239px;font-size:17.9px;line-height:17.9px;color:#333;transform:scaleX(0.9567);">Erledigt</div>
<div class="r" style="left:492px;top:58px;width:10px;height:204px;background:#fb4146;border-radius:5px;box-shadow:0 2px 5px rgba(0,0,0,.28);"></div>
<div class="r" style="left:0px;top:0px;width:2530px;height:1227px;border:1px solid #9c9c9c;background:transparent;"></div>
</body></html>
